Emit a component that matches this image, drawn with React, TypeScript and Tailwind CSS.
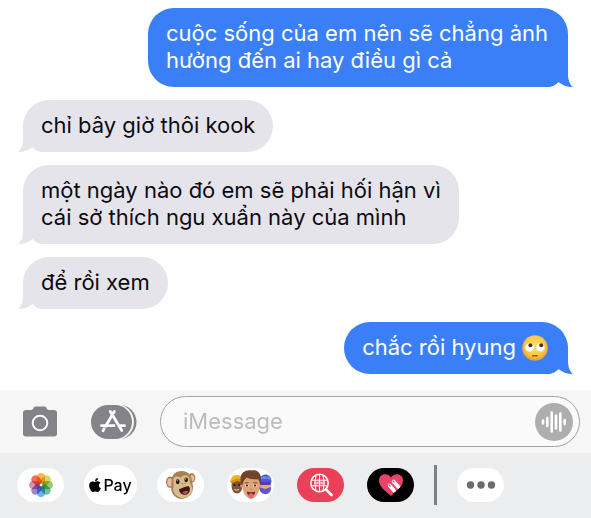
import React from 'react';
import { FaApple } from 'react-icons/fa';
import clsx from 'clsx';

interface Message {
  id: number;
  mine: boolean;
  text: string;
  emoji?: boolean;
}

const MESSAGES: Message[] = [
  { id: 1, mine: true, text: 'cuộc sống của em nên sẽ chẳng ảnh\nhưởng đến ai hay điều gì cả' },
  { id: 2, mine: false, text: 'chỉ bây giờ thôi kook' },
  { id: 3, mine: false, text: 'một ngày nào đó em sẽ phải hối hận vì\ncái sở thích ngu xuẩn này của mình' },
  { id: 4, mine: false, text: 'để rồi xem' },
  { id: 5, mine: true, text: 'chắc rồi hyung', emoji: true },
];

function RollingEyes() {
  return (
    <svg viewBox="0 0 26 26" className="ml-[6px] h-[26px] w-[26px] shrink-0" role="img" aria-label="rolling eyes">
      <defs>
        <radialGradient id="face" cx="50%" cy="42%" r="58%">
          <stop offset="0" stopColor="#ffe763" />
          <stop offset="0.65" stopColor="#fccb45" />
          <stop offset="1" stopColor="#e99a2c" />
        </radialGradient>
      </defs>
      <circle cx="13" cy="13" r="12.7" fill="url(#face)" />
      <circle cx="7.6" cy="12.4" r="4.6" fill="#fff" stroke="#dca64a" strokeWidth="0.4" />
      <circle cx="18.4" cy="12.4" r="4.6" fill="#fff" stroke="#dca64a" strokeWidth="0.4" />
      <circle cx="8.4" cy="10.2" r="2" fill="#54331c" />
      <circle cx="19.2" cy="10.2" r="2" fill="#54331c" />
      <path d="M10.6 20.8H15.2" fill="none" stroke="#a5561c" strokeWidth="1.4" strokeLinecap="round" />
    </svg>
  );
}

function Bubble({ message }: { message: Message }) {
  const { mine, text, emoji } = message;
  return (
    <li
      className={clsx(
        'relative flex items-center rounded-[26px] pt-3 pb-[13px] pl-[18px] text-[22px] leading-[27px]',
        mine ? 'self-end bg-[#3a7ff7] pr-5 text-white' : 'self-start bg-[#e5e4ea] pr-[18px] text-[#0b0b10]',
      )}
    >
      <p className="whitespace-pre-line">{text}</p>
      {emoji && <RollingEyes />}
      <svg
        viewBox="0 0 34 28"
        aria-hidden="true"
        className={clsx(
          'absolute bottom-0 h-7 w-[34px]',
          mine ? '-right-[5px] -scale-x-100 text-[#3a7ff7]' : '-left-[5px] text-[#e5e4ea]',
        )}
      >
        <path d="M5 0V15C5 21 3 26 0 28C6 28 11 26 14.500 23C17 25.500 20 28 25 28H33Z" fill="currentColor" />
      </svg>
    </li>
  );
}

function CameraIcon() {
  return (
    <svg viewBox="0 0 34 31" className="h-[31px] w-[34px]" aria-hidden="true">
      <path
        d="M3 4H8.5C10 4 10.5 .5 12.5 .5H21.5C23.5 .5 24 4 25.5 4H31Q34 4 34 7V27.500Q34 30.500 31 30.500H3Q0 30.500 0 27.500V7Q0 4 3 4Z"
        fill="#838388"
      />
      <circle cx="17" cy="17" r="7.3" fill="none" stroke="#fff" strokeWidth="2" />
    </svg>
  );
}

function AppStoreIcon() {
  return (
    <svg viewBox="0 0 46 36" className="h-9 w-[46px]" aria-hidden="true">
      <rect x="5" y="1" width="40.500" height="34" rx="17" fill="#838388" />
      <rect x="0" y="0" width="43" height="36" rx="18" fill="#f6f6f7" />
      <rect x="0" y="1" width="41" height="34" rx="17" fill="#838388" />
      <g fill="none" stroke="#fff" strokeWidth="2.800" strokeLinecap="round">
        <path d="M23.300 7.500L14.600 22.300M19.300 7.500L30.800 26.500M10.500 21.700H23M28 21.700H33.500M13 25L12 26.800" />
      </g>
    </svg>
  );
}

function PhotosIcon() {
  const petals = ['#fbb03b', '#d9cf45', '#8cc665', '#5cb89a', '#62a8f0', '#8e78c4', '#d97fae', '#f2604f'];
  return (
    <svg viewBox="0 0 24 24" className="h-[26px] w-[26px]" aria-hidden="true">
      {petals.map((color, i) => (
        <rect
          key={color}
          x="8.300"
          y="1"
          width="7.400"
          height="10"
          rx="3.700"
          fill={color}
          fillOpacity="0.900"
          className="mix-blend-multiply"
          transform={`rotate(${i * 45} 12 12)`}
        />
      ))}
    </svg>
  );
}

function MonkeyIcon() {
  return (
    <svg viewBox="0 0 34 32" className="h-[30px] w-8" aria-hidden="true">
      <ellipse cx="5.500" cy="13" rx="4.500" ry="6" fill="#98754d" />
      <ellipse cx="5.200" cy="13.300" rx="3" ry="4.400" fill="#edb9a0" />
      <ellipse cx="28.500" cy="8.500" rx="3.800" ry="5" fill="#98754d" />
      <ellipse cx="28.800" cy="8.800" rx="2.500" ry="3.500" fill="#edb9a0" />
      <path d="M7 12C7 4 12 1 18 1C24 1 28 5 28.500 11C29 15 31 18 29 23C27 28 22 31 17 31C10 30 6 24 6.500 19Z" fill="#a58252" />
      <path d="M9 12C8 6 13 6 17 8C20 4 27 5 26 11C26 13 28 16 29 19C30 24 25 30 19 30C12 29 7 23 9 18Z" fill="#dabb8c" />
      <ellipse cx="13.500" cy="12.500" rx="2" ry="2.600" fill="#26180f" />
      <ellipse cx="22.500" cy="10.500" rx="1.900" ry="2.500" fill="#26180f" />
      <circle cx="13" cy="11.500" r=".6" fill="#fff" />
      <circle cx="22" cy="9.500" r=".6" fill="#fff" />
      <path d="M18 14.500L19 15M21 14L21.500 14.500" stroke="#936a44" strokeWidth="1" strokeLinecap="round" />
      <path d="M15 20.500C18 20 22 16.500 25.500 17.500C28 21 25.500 26.500 21 26.500C17.500 26.500 14.500 23 15 20.500Z" fill="#3e1715" />
      <path d="M18.500 24C20 22.500 23 22 25 23C23.500 26 20 26.500 18.500 24Z" fill="#b8524c" />
    </svg>
  );
}

function MemojiIcon() {
  return (
    <svg viewBox="0 0 44 34" className="h-[34px] w-11" aria-hidden="true">
      <ellipse cx="8" cy="17.500" rx="5.500" ry="8" fill="#805137" />
      <path d="M1.500 14C1 5 13 5 14 12L8 13Z" fill="#f2b321" />
      <path d="M1.500 13L8 10.500L14 11.500V14L8 13L2 15.500Z" fill="#d8901a" />
      <circle cx="5.500" cy="17" r="1" fill="#24130e" />
      <circle cx="10" cy="17" r="1" fill="#24130e" />
      <path d="M5.500 21.500Q8 23 10 21.500" stroke="#f4dccb" strokeWidth="1" fill="none" />
      <ellipse cx="36" cy="18" rx="6" ry="7.500" fill="#e2ad70" />
      <path d="M30 15C30 4 42.500 4 42.500 14L41 17H31Z" fill="#435cdb" />
      <path d="M30.500 9.500Q36 7 41.500 9.500V12Q36 9.500 30.500 12Z" fill="#7185ed" />
      <path d="M31 14H41.500V17H31Z" fill="#563daa" />
      <path d="M30 19L36 21L42 19C43 28 31 29 30 19Z" fill="#6254d1" />
      <circle cx="12.800" cy="18" r="1.600" fill="#d99970" />
      <circle cx="31.200" cy="18" r="1.600" fill="#d99970" />
      <path d="M13 13Q13 6 22 6Q31 6 31 14L30 22Q28 30 22 31Q16 30 14 22Z" fill="#dfa27a" />
      <path d="M12.500 16.500C8.500 5 17 1 22.500 2.500C30 1 34 8 31.300 16.500L29.500 11.500C24 11.500 20.500 11 17.500 9.500C15.500 12 14 13 13.700 17Z" fill="#70432b" />
      <path d="M15.800 15L19.500 14.600M24.500 14.600L28.200 15" stroke="#65402a" strokeWidth=".9" />
      <ellipse cx="18" cy="17.500" rx="1.600" ry="1.200" fill="#fff" />
      <ellipse cx="26" cy="17.500" rx="1.600" ry="1.200" fill="#fff" />
      <circle cx="18" cy="17.500" r="1.100" fill="#321c14" />
      <circle cx="26" cy="17.500" r="1.100" fill="#321c14" />
      <path d="M21 21.200H23" stroke="#b97658" strokeWidth="1" />
      <path d="M18 23.500Q22 24.800 26 23.500Q26 28 22 28Q18 28 18 23.500Z" fill="#76262a" />
      <path d="M19.800 26Q22 24.500 24.200 26V29Q22 32 19.800 29Z" fill="#e7656d" />
    </svg>
  );
}

function SearchIcon() {
  return (
    <svg viewBox="0 0 24 24" className="h-6 w-6" fill="none" stroke="#fff" aria-hidden="true">
      <circle cx="10.500" cy="10" r="8.700" strokeWidth="1.600" />
      <path d="M17 16.500L22.500 22" strokeWidth="2.600" strokeLinecap="round" />
      <path d="M2.500 7.200H18.500M2.500 12.800H18.500M10.500 2V18M7 2.500Q4.500 10 7 17.500M14 2.500Q16.500 10 14 17.500" strokeWidth="1" />
      <path d="M5.500 8.500H15.500V11.500H5.500Z" fill="#fff" fillOpacity=".55" stroke="none" />
    </svg>
  );
}

function HeartIcon() {
  return (
    <svg viewBox="0 0 26 24" className="h-6 w-[26px]" aria-hidden="true">
      <path d="M13 23C8 18.500 1 14 1 7.500C1 .5 9.500 -1 13 4.500C16.500 -1 25 .5 25 7.500C25 14 18 18.500 13 23Z" fill="#e94368" />
      <path d="M15.500 8.500L20.500 14M11.500 12.500L16.500 18" stroke="#fff" strokeWidth="3.600" strokeLinecap="round" />
      <path d="M15 8L16 9M11 12L12 13" stroke="#e94368" strokeWidth="1.200" strokeLinecap="round" />
      <path d="M19 17.500L22.500 14L24 15.500L16.500 22.500L14.800 20.800Z" fill="#000" />
    </svg>
  );
}

interface AppButtonProps {
  label: string;
  className?: string;
  children: React.ReactNode;
}

function AppButton({ label, className = 'h-[34px] w-[47px] bg-white', children }: AppButtonProps) {
  return (
    <div className="flex w-[53px] shrink-0 justify-center">
      <button type="button" aria-label={label} className={clsx('flex items-center justify-center rounded-full', className)}>
        {children}
      </button>
    </div>
  );
}

export default function App() {
  return (
    <div className="flex min-h-screen flex-col bg-white font-['Inter','Noto_Sans',sans-serif]">
      <ul className="flex flex-1 flex-col gap-[13px] pt-2 pr-[23px] pb-4 pl-[23px]">
        {MESSAGES.map((message) => (
          <Bubble key={message.id} message={message} />
        ))}
      </ul>

      <form className="flex items-center bg-[#f6f6f7] py-[6px] pr-[11px] pl-[23px]" onSubmit={(e) => e.preventDefault()}>
        <button type="button" aria-label="Camera">
          <CameraIcon />
        </button>
        <button type="button" aria-label="Apps" className="ml-[34px]">
          <AppStoreIcon />
        </button>
        <div className="ml-[23px] flex h-[51px] min-w-0 flex-1 items-center rounded-full border border-[#a3a3a5] bg-[#fafafa] pr-[6px] pl-[22px]">
          <input
            type="text"
            aria-label="iMessage"
            placeholder="iMessage"
            className="min-w-0 flex-1 bg-transparent text-[22px] leading-[27px] outline-none placeholder:text-[#bcbcc0]"
          />
          <button type="button" aria-label="Record audio" className="shrink-0">
            <svg viewBox="0 0 38 38" className="h-[38px] w-[38px]" aria-hidden="true">
              <circle cx="19" cy="19" r="19" fill="#aeaeb1" />
              <path
                d="M8 17.500V20.500M12.300 15V23M16.700 9.500V28.500M21 12.500V25.500M25.300 10.500V27.500M29.700 17V21"
                stroke="#fff"
                strokeWidth="2.600"
                strokeLinecap="round"
              />
            </svg>
          </button>
        </div>
      </form>

      <nav aria-label="iMessage apps" className="flex items-center gap-[17px] bg-[#ebedef] pt-3 pb-[14px] pl-[14px]">
        <AppButton label="Photos">
          <PhotosIcon />
        </AppButton>
        <AppButton label="Apple Pay" className="h-10 w-[53px] gap-[2px] bg-white text-black">
          <FaApple className="h-4 w-3 shrink-0" />
          <span className="text-[16px] leading-5 font-medium">Pay</span>
        </AppButton>
        <AppButton label="Animoji">
          <MonkeyIcon />
        </AppButton>
        <AppButton label="Memoji">
          <MemojiIcon />
        </AppButton>
        <AppButton label="Image search" className="h-[34px] w-[47px] bg-[#ec4059]">
          <SearchIcon />
        </AppButton>
        <AppButton label="Digital Touch" className="h-[34px] w-[47px] bg-black">
          <HeartIcon />
        </AppButton>
        <div className="h-10 w-[3px] shrink-0 bg-[#7f8083]" />
        <AppButton label="More">
          <svg viewBox="0 0 30 8" className="h-2 w-[30px]" fill="#6b6c71" aria-hidden="true">
            <circle cx="4.500" cy="4" r="3.700" />
            <circle cx="15" cy="4" r="3.700" />
            <circle cx="25.500" cy="4" r="3.700" />
          </svg>
        </AppButton>
      </nav>
    </div>
  );
}
